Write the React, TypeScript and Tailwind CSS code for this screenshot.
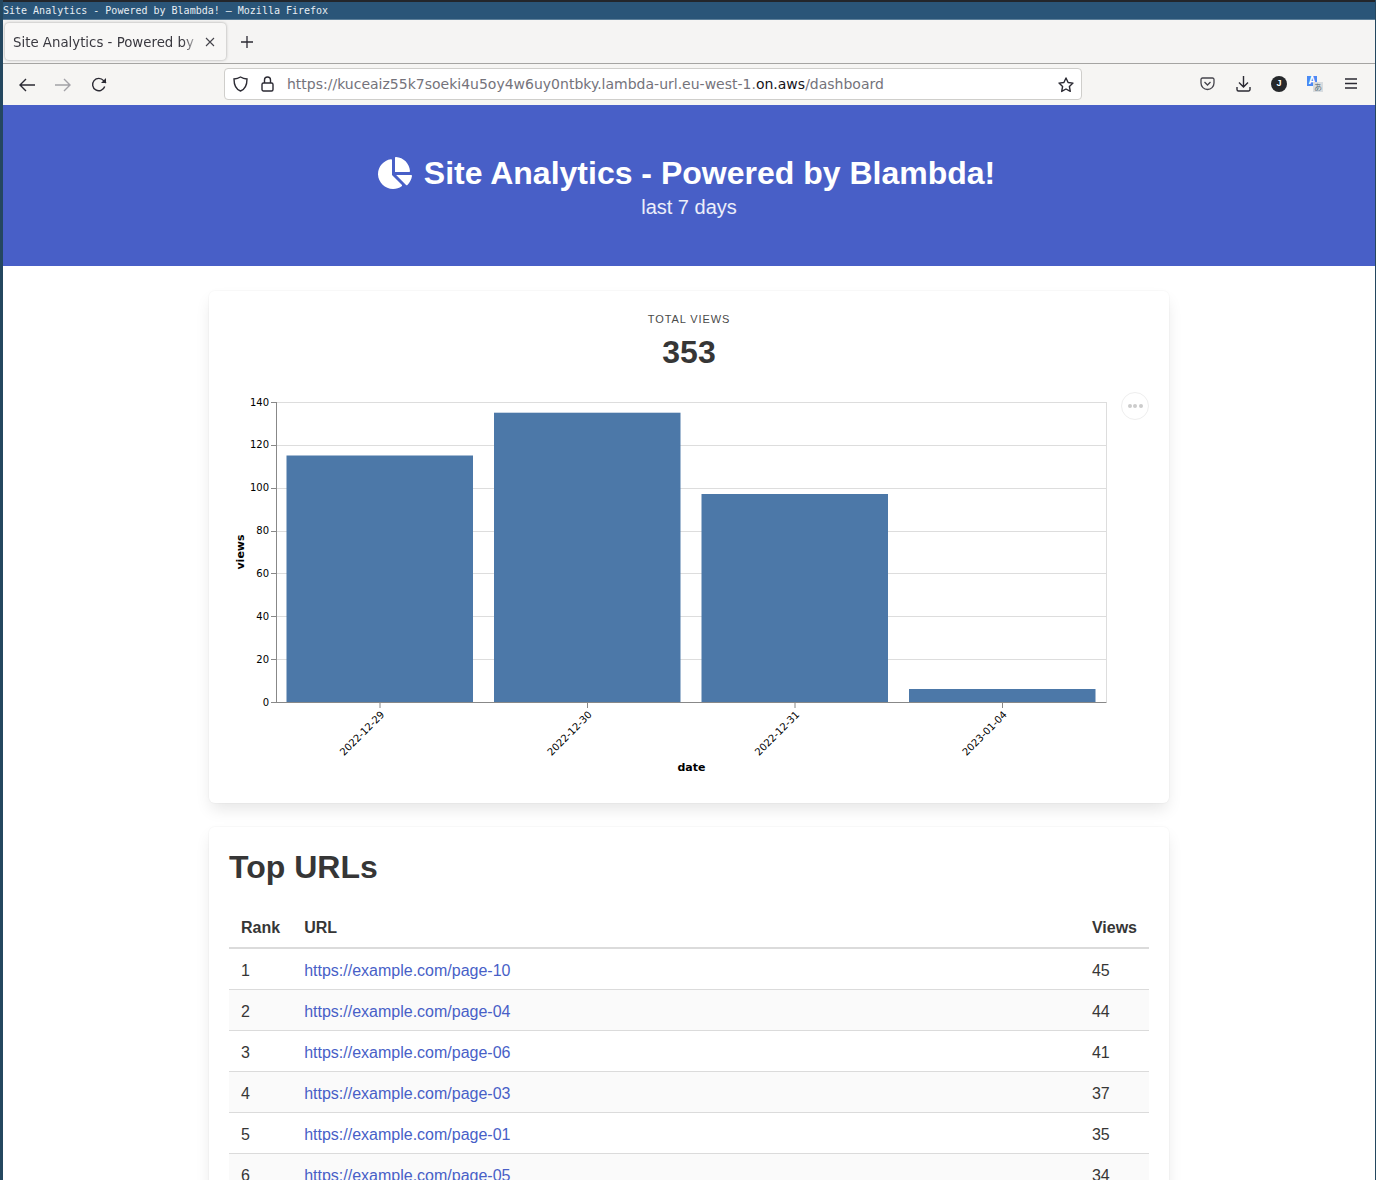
import { FaChartPie } from "react-icons/fa";

const rows = [
  { rank: 1, url: "https://example.com/page-10", views: 45 },
  { rank: 2, url: "https://example.com/page-04", views: 44 },
  { rank: 3, url: "https://example.com/page-06", views: 41 },
  { rank: 4, url: "https://example.com/page-03", views: 37 },
  { rank: 5, url: "https://example.com/page-01", views: 35 },
  { rank: 6, url: "https://example.com/page-05", views: 34 },
];

const bars = [
  { date: "2022-12-29", x: 286.5, y: 455.5, tick: 380 },
  { date: "2022-12-30", x: 494, y: 412.7, tick: 587.5 },
  { date: "2022-12-31", x: 701.5, y: 494, tick: 795 },
  { date: "2023-01-04", x: 909, y: 689, tick: 1002.5 },
];

const yTicks = [
  { label: "140", y: 402.5, textY: 406 },
  { label: "120", y: 445.5, textY: 448 },
  { label: "100", y: 488.5, textY: 491 },
  { label: "80", y: 531.5, textY: 534 },
  { label: "60", y: 573.5, textY: 577 },
  { label: "40", y: 616.5, textY: 620 },
  { label: "20", y: 659.5, textY: 663 },
];

function BrowserChrome() {
  const stroke = "#2b2a33";
  return (
    <div className="font-['DejaVu_Sans',sans-serif]">
      <div className="h-[2px] bg-[#23262b]" />
      <div className="h-[18px] border-b border-b-[#5d7f99] bg-[#2a5578] font-['DejaVu_Sans_Mono',monospace] text-[10px] leading-[17px] text-[#e8eef3]">
        Site Analytics - Powered by Blambda! — Mozilla Firefox
      </div>
      <div className="flex h-[44px] items-center border-b border-[#a5a4a2] bg-[#f5f4f3] pl-[2px]">
        <div className="flex h-[37px] w-[221px] items-center justify-between rounded-[4px] bg-[#f8f7f6] pl-2 pr-[11px] shadow-[0_0_3px_rgba(0,0,0,0.35)]">
          <span className="w-[181px] whitespace-nowrap pt-[2px] text-[13.33px] text-[#3a3940] [mask-image:linear-gradient(to_right,black_170px,rgba(0,0,0,0.4)_181px)]">
            Site Analytics - Powered by
          </span>
          <svg width="10" height="10" viewBox="0 0 10 10" stroke="#45444c" strokeWidth="1.1" fill="none">
            <path d="M1 1l8 8M9 1l-8 8" />
          </svg>
        </div>
        <svg className="ml-[15px]" width="12" height="12" viewBox="0 0 12 12" stroke={stroke} strokeWidth="1.3" fill="none">
          <path d="M6 0v12M0 6h12" />
        </svg>
      </div>
      <div className="flex h-[41px] items-center bg-[#f6f5f3] pl-[16px]">
        <svg width="16" height="14" viewBox="0 0 16 14" fill="none" stroke={stroke} strokeWidth="1.4">
          <path d="M16 7H1M7 1L1 7l6 6" />
        </svg>
        <svg className="ml-5" width="16" height="14" viewBox="0 0 16 14" fill="none" stroke="#a3a2a7" strokeWidth="1.4">
          <path d="M0 7h15M9 1l6 6-6 6" />
        </svg>
        <svg className="ml-5" width="16" height="16" viewBox="0 0 16 16" fill="none" stroke={stroke} strokeWidth="1.4">
          <path d="M13.7 9.5A6.2 6.2 0 1 1 12.6 3.6L15 6" />
          <path d="M15 1v5h-5" fill={stroke} stroke="none" />
        </svg>
        <div className="mb-[2px] ml-[117px] flex h-[32px] w-[858px] items-center rounded-[4px] border border-[#cfcecb] bg-white pl-[8px] pr-[7px]">
          <svg width="15" height="16" viewBox="0 0 15 16" fill="none" stroke={stroke} strokeWidth="1.4">
            <path d="M7.5 1C5.5 2.2 3.5 2.8 1 3c0 5 1 10 6.5 12C13 13 14 8 14 3c-2.5-.2-4.5-.8-6.5-2z" />
          </svg>
          <svg className="ml-[13px]" width="13" height="16" viewBox="0 0 13 16" fill="none" stroke={stroke} strokeWidth="1.4">
            <rect x="1" y="7" width="11" height="8" rx="1.5" />
            <path d="M3.5 7V4a3 3 0 0 1 6 0v3" />
          </svg>
          <span className="ml-[13px] flex-1 whitespace-nowrap pt-[1px] text-[14px] text-[#74737b]">
            https://kuceaiz55k7soeki4u5oy4w6uy0ntbky.lambda-url.eu-west-1.<span className="text-[#15141a]">on.aws</span>/dashboard
          </span>
          <svg className="mt-[2px]" width="16" height="16" viewBox="0 0 16 16" fill="none" stroke={stroke} strokeWidth="1.4" strokeLinejoin="round">
            <path d="M8 1l2.1 4.5 4.9.6-3.6 3.4.9 4.9L8 12l-4.3 2.4.9-4.9L1 6.1l4.9-.6z" />
          </svg>
        </div>
        <div className="mb-[2px] ml-[118px] flex items-center">
          <svg width="15" height="14" viewBox="0 0 15 14" fill="none" stroke="#45444c" strokeWidth="1.3">
            <path d="M2.5 1h10A1.5 1.5 0 0 1 14 2.5V6A6.5 6.5 0 0 1 1 6V2.5A1.5 1.5 0 0 1 2.5 1z" />
            <path d="M4.5 5l3 3 3-3" />
          </svg>
          <svg className="ml-[21px]" width="15" height="16" viewBox="0 0 15 16" fill="none" stroke={stroke} strokeWidth="1.4">
            <path d="M7.5 0v10.5M3 6.5l4.5 4.5L12 6.5M1 11v2.5A1.5 1.5 0 0 0 2.5 15h10a1.5 1.5 0 0 0 1.5-1.5V11" />
          </svg>
          <div className="ml-[20px] flex h-4 w-4 items-center justify-center rounded-full bg-[#26282b] font-['Liberation_Sans',sans-serif] text-[9px] font-bold text-white">
            J
          </div>
          <div className="relative ml-[20px] h-[16px] w-[16px]">
            <div className="absolute left-0 top-0 flex h-[10px] w-[10px] items-center justify-center bg-[#4a8af4] font-['Liberation_Sans',sans-serif] text-[10px] font-bold leading-none text-white">
              A
            </div>
            <div className="absolute left-[6px] top-[6px] flex h-[10px] w-[10px] items-center justify-center bg-[#d8dcdf] font-['Noto_Sans_CJK_JP',sans-serif] text-[8px] leading-none text-[#5e7380]">
              あ
            </div>
          </div>
          <svg className="ml-[22px]" width="12" height="11" viewBox="0 0 12 11" stroke={stroke} strokeWidth="1.3" fill="none">
            <path d="M0 1h12M0 5.5h12M0 10h12" />
          </svg>
        </div>
      </div>
    </div>
  );
}

function Chart() {
  return (
    <svg className="block" width="920" height="392" viewBox="229 392 920 392" fontFamily="'DejaVu Sans', sans-serif">
      {yTicks.map((t) => (
        <line key={t.label} x1="277" x2="1106.5" y1={t.y} y2={t.y} stroke="#ddd" />
      ))}
      <line x1="1106.5" x2="1106.5" y1="402" y2="702" stroke="#ddd" />
      {bars.map((b) => (
        <rect key={b.date} x={b.x} y={b.y} width="186.5" height={702 - b.y} fill="#4c78a8" />
      ))}
      <line x1="276.5" x2="276.5" y1="402" y2="703" stroke="#888" />
      <line x1="276" x2="1106.5" y1="702.5" y2="702.5" stroke="#888" />
      {[...yTicks, { label: "0", y: 702.5, textY: 706 }].map((t) => (
        <g key={t.label}>
          <line x1="271" x2="277" y1={t.y} y2={t.y} stroke="#888" />
          <text x="269" y={t.textY} textAnchor="end" fontSize="10" fill="#000">
            {t.label}
          </text>
        </g>
      ))}
      {bars.map((b) => (
        <g key={b.date}>
          <line x1={b.tick} x2={b.tick} y1="702" y2="708" stroke="#888" />
          <text
            transform={`translate(${b.tick + 3} 713) rotate(-45)`}
            textAnchor="end"
            dominantBaseline="middle"
            fontSize="10"
            fill="#000"
          >
            {b.date}
          </text>
        </g>
      ))}
      <text transform="translate(244 552) rotate(-90)" textAnchor="middle" fontSize="11" fontWeight="700" fill="#000">
        views
      </text>
      <text x="691.5" y="771" textAnchor="middle" fontSize="11" fontWeight="700" fill="#000">
        date
      </text>
    </svg>
  );
}

export default function App() {
  return (
    <div className="h-[1180px] overflow-hidden border-l-[3px] border-r border-l-[#24475f] border-r-[#24475f] bg-white font-['Liberation_Sans',sans-serif] text-[#363636]">
      <BrowserChrome />
      <section className="flex h-[161px] flex-col items-center bg-[#485fc7] pt-[48px] text-white">
        <h1 className="flex items-center gap-[12px] pr-[5px] text-[32px] font-bold leading-[40px]">
          <FaChartPie className="text-[34px]" />
          Site Analytics - Powered by Blambda!
        </h1>
        <p className="mt-[2px] text-[20px] leading-[25px] text-white/90">last 7 days</p>
      </section>
      <main className="mx-auto mt-[25px] flex w-[960px] flex-col gap-6">
        <div className="h-[512px] rounded-md bg-white px-5 pt-5 shadow-[0_8px_16px_-2px_rgba(10,10,10,0.1),0_0_0_1px_rgba(10,10,10,0.02)]">
          <p className="text-center text-[11px] uppercase leading-[16px] tracking-[0.9px] text-[#4a4a4a]">Total Views</p>
          <p className="mt-[5px] text-center text-[32px] font-bold leading-[40px] text-[#363636]">353</p>
          <div className="relative mt-[20px]">
            <Chart />
            <button className="absolute right-0 top-0 flex h-7 w-7 items-center justify-center gap-[1.5px] rounded-full border border-[#eee] bg-white">
              <span className="h-[4px] w-[4px] rounded-full bg-[#ccc]" />
              <span className="h-[4px] w-[4px] rounded-full bg-[#ccc]" />
              <span className="h-[4px] w-[4px] rounded-full bg-[#ccc]" />
            </button>
          </div>
        </div>
        <div className="rounded-md bg-white p-5 shadow-[0_8px_16px_-2px_rgba(10,10,10,0.1),0_0_0_1px_rgba(10,10,10,0.02)]">
          <h2 className="text-[32px] font-bold leading-[40px]">Top URLs</h2>
          <table className="mt-[21px] w-full border-collapse text-[16px] leading-[24px]">
            <thead>
              <tr className="border-b-2 border-[#dbdbdb] text-left font-bold">
                <th className="w-[63px] px-3 pb-[7px] pt-2">Rank</th>
                <th className="px-3 pb-[7px] pt-2">URL</th>
                <th className="w-[69px] px-3 pb-[7px] pt-2">Views</th>
              </tr>
            </thead>
            <tbody>
              {rows.map((r) => (
                <tr key={r.rank} className="border-b border-[#dbdbdb] even:bg-[#fafafa]">
                  <td className="px-3 pb-[6px] pt-[10px]">{r.rank}</td>
                  <td className="px-3 pb-[6px] pt-[10px]">
                    <a className="text-[#485fc7]" href="#">
                      {r.url}
                    </a>
                  </td>
                  <td className="px-3 pb-[6px] pt-[10px]">{r.views}</td>
                </tr>
              ))}
            </tbody>
          </table>
        </div>
      </main>
    </div>
  );
}
